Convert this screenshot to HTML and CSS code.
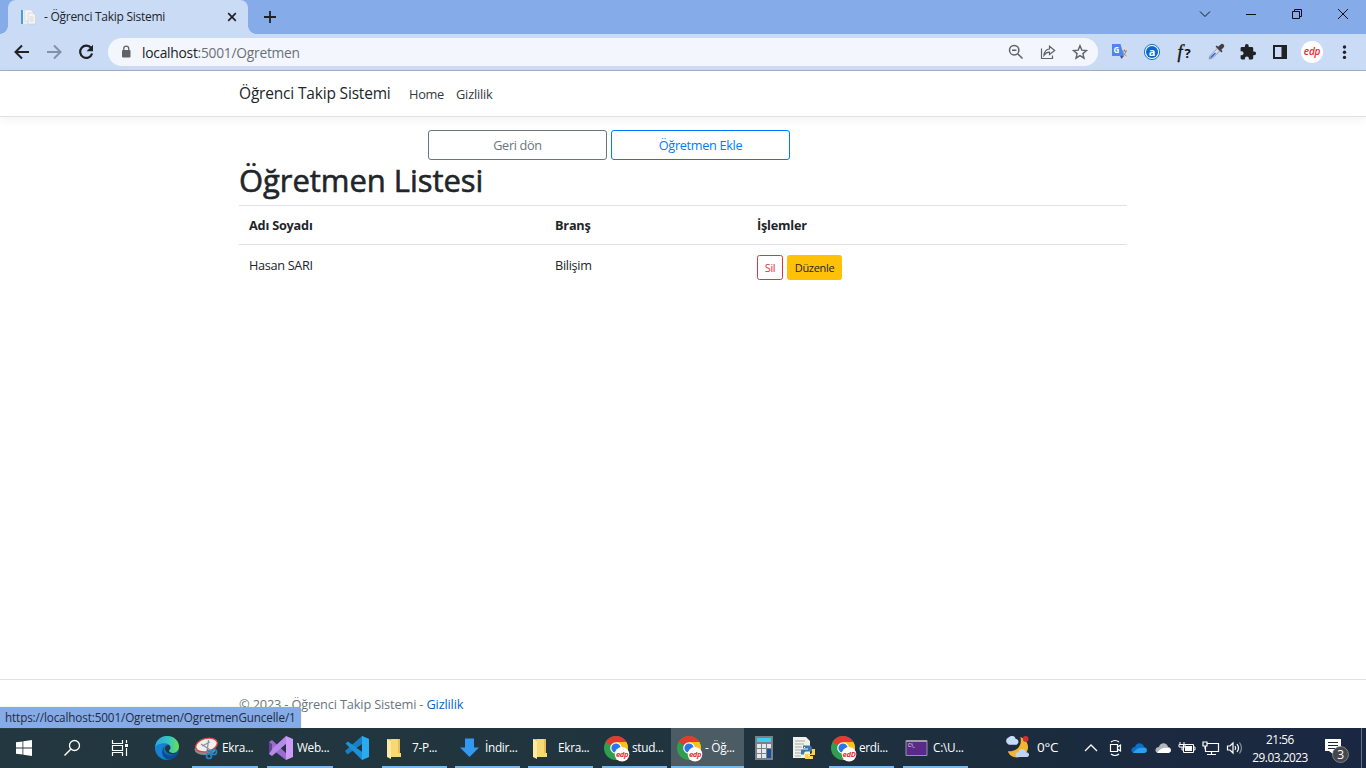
FILE: index.html
```html
<!DOCTYPE html>
<html lang="tr">
<head>
<meta charset="utf-8">
<title>- Öğrenci Takip Sistemi</title>
<link rel="stylesheet" href="styles.css">
</head>
<body>
<svg width="0" height="0" class="defs">
  <defs>
    <linearGradient id="edgeBlue" x1="0" y1="0" x2="1" y2="1"><stop offset="0" stop-color="#1b9de2"/><stop offset="1" stop-color="#0c4a9c"/></linearGradient>
    <linearGradient id="edgeGreen" x1="0" y1="0" x2="1" y2="0"><stop offset="0" stop-color="#2da5e0"/><stop offset=".6" stop-color="#38c8bc"/><stop offset="1" stop-color="#6be04b"/></linearGradient>
    <symbol id="chrome" viewBox="0 0 26 26">
      <circle cx="12" cy="12" r="12" fill="#2f9e4f"/>
      <path d="M12 12 1.6 6A12 12 0 0 1 22.4 6z" fill="#e33b2e"/>
      <path d="M12 6h10.4A12 12 0 0 1 12 24l5.2-9z" fill="#fbc116"/>
      <circle cx="12" cy="12" r="5.8" fill="#fff"/><circle cx="12" cy="12" r="4.6" fill="#2a76e8"/>
      <circle cx="18" cy="18.3" r="7.3" fill="#fff"/>
    </symbol>
    <symbol id="folder" viewBox="0 0 24 24">
      <path d="M5 3h13v17l-13 1z" fill="#e9bd55"/><path d="M9 3h7v14h3v4H9z" fill="#f8d775"/><path d="M5 3l4 2v18l-4-2z" fill="#ffe9a6"/>
    </symbol>
  </defs>
</svg>

<header class="tabstrip">
  <div class="tab">
    <svg class="favicon" viewBox="0 0 16 16"><path d="M1 1h4v14H1z" fill="#4b9fcb"/><path d="M3 1h7v14H3z" fill="#e9eef2"/><path d="M5 1h6l2 2v9H5z" fill="#f7f7f7" stroke="#d3d6da" stroke-width=".6"/><path d="M8 4h5l2.500 2v9H8z" fill="#f5f5f3" stroke="#c8cbcf" stroke-width=".6"/><path d="M9.500 8h4M9.500 10h4M9.500 12h4" stroke="#d8d8d8"/></svg>
    <span class="tab-title">- Öğrenci Takip Sistemi</span>
    <svg class="tab-close" viewBox="0 0 10 10"><path d="M1.200 1.200l7.600 7.600M8.800 1.200 1.200 8.800" stroke="#202124" stroke-width="1.700"/></svg>
  </div>
  <svg class="new-tab" viewBox="0 0 12 12"><path d="M6 0v12M0 6h12" stroke="#202124" stroke-width="1.800"/></svg>
  <div class="window-controls">
    <svg viewBox="0 0 12 12"><path d="M1 3.500l5 5 5-5" fill="none" stroke="#151515"/></svg>
    <svg viewBox="0 0 12 12"><path d="M1 6.500h10" stroke="#111"/></svg>
    <svg viewBox="0 0 12 12"><path d="M1.500 3.500h7v7h-7zM3.500 3.500v-2h7v7h-2" fill="none" stroke="#111"/></svg>
    <svg viewBox="0 0 12 12"><path d="M1 1l10 10M11 1 1 11" stroke="#111"/></svg>
  </div>
</header>

<div class="toolbar">
  <svg class="tool" viewBox="0 0 24 24"><path d="M19 12H6M12 5.500 5.500 12l6.500 6.500" fill="none" stroke="#202124" stroke-width="2"/></svg>
  <svg class="tool" viewBox="0 0 24 24"><path d="M5 12h13M12 5.500l6.500 6.500-6.500 6.500" fill="none" stroke="#8490a6" stroke-width="2"/></svg>
  <svg class="tool" viewBox="0 0 24 24"><path d="M17.200 8.200A6.100 6.100 0 1 0 18.100 13.500" fill="none" stroke="#202124" stroke-width="2.200"/><path d="M19 4.800v6.500h-6.500z" fill="#202124"/></svg>
  <div class="omnibox">
    <svg class="lock" viewBox="0 0 10 14"><rect x="1" y="5" width="8.500" height="7.500" rx="1" fill="#5f6368"/><path d="M2.800 5V3.600a2.450 2.450 0 0 1 4.900 0V5" fill="none" stroke="#5f6368" stroke-width="1.300"/></svg>
    <span class="url"><b>localhost</b>:5001/Ogretmen</span>
    <svg class="omni-icon" viewBox="0 0 20 20"><circle cx="8.200" cy="8.200" r="4.700" fill="none" stroke="#5f6368" stroke-width="1.500"/><path d="M11.700 11.700l4.800 4.800M6 8.200h4.400" stroke="#5f6368" stroke-width="1.500"/></svg>
    <svg class="omni-icon" viewBox="0 0 20 20"><path d="M3.500 6.500v10h11v-3" fill="none" stroke="#5f6368" stroke-width="1.200"/><path d="M11.500 4.300l5.200 4.200-5.200 4v-2.400c-2.500-.1-4 1-5.500 3.200.3-3.500 2-6 5.500-6.300z" fill="none" stroke="#5f6368" stroke-width="1.200"/></svg>
    <svg class="omni-icon" viewBox="0 0 20 20"><path d="M10 3.700l1.800 4.400 4.700.4-3.600 3.100 1.100 4.600-4-2.500-4 2.500 1.100-4.600-3.600-3.100 4.700-.4z" fill="none" stroke="#5f6368" stroke-width="1.400"/></svg>
  </div>
  <div class="extensions">
    <svg class="ext" viewBox="0 0 24 24"><path d="M10 7h9.500v12H13z" fill="#dcdcdc"/><path d="M4 4h8.500l3.500 12H4z" fill="#4a86ee"/><path d="M12 16h4l-2.500 3z" fill="#3457b5"/><text x="5.500" y="13" font-size="8" font-weight="700" fill="#fff">G</text><path d="M14 11h5M16.500 9.500V11M18 11c-.5 2.500-1.500 4-3.200 5M15 12c.8 2 2 3.300 3.600 4" stroke="#76889b" fill="none"/></svg>
    <svg class="ext" viewBox="0 0 24 24"><circle cx="12" cy="12" r="7.600" fill="#eff6ff" stroke="#1778cc"/><circle cx="12" cy="12" r="6" fill="#0b69c9"/><text x="12" y="15.800" text-anchor="middle" font-size="11" font-weight="700" fill="#fff">a</text></svg>
    <span class="font-finder"><i>f</i><b>?</b></span>
    <svg class="ext" viewBox="0 0 24 24"><path d="M5 19l1.200-3.500 7-7 2.500 2.500-7 7z" fill="#d9deeb" stroke="#7b8aa5" stroke-width=".8"/><path d="M6 18l1-2 4-3.500 1 1-4 4z" fill="#3466df"/><path d="M11.500 6.500l6 6 1-1.300-1.200-1.400 2.300-2.400a2.100 2.100 0 0 0-3-3l-2.400 2.300L12.800 5.500z" fill="#433e43"/></svg>
    <svg class="ext" viewBox="0 0 24 24"><path d="M18.200 11.400h-1V8.300c0-.8-.6-1.400-1.400-1.400h-3.100V6a1.900 1.900 0 0 0-3.800 0v.9H6c-.8 0-1.400.6-1.400 1.400v2.900h.9a2 2 0 0 1 0 4.100h-.9v2.800c0 .8.600 1.400 1.400 1.400h2.900v-.9a2 2 0 0 1 4 0v.9h2.900c.8 0 1.400-.6 1.400-1.400v-2.900h1a1.900 1.900 0 0 0 0-3.800z" fill="#202124"/></svg>
    <svg class="ext" viewBox="0 0 24 24"><path d="M5 5h14v14H5zm2 2v10h6.500V7z" fill="#202124" fill-rule="evenodd"/></svg>
    <span class="avatar">edp</span>
    <svg class="ext" viewBox="0 0 24 24"><g fill="#202124"><circle cx="12.500" cy="7" r="1.700"/><circle cx="12.500" cy="12.200" r="1.700"/><circle cx="12.500" cy="17.400" r="1.700"/></g></svg>
  </div>
</div>

<div class="page">
  <nav class="navbar">
    <a class="brand">Öğrenci Takip Sistemi</a>
    <a class="nav-home">Home</a>
    <a class="nav-privacy">Gizlilik</a>
  </nav>
  <main class="content">
    <div class="actions">
      <a class="btn btn-secondary">Geri dön</a>
      <a class="btn btn-primary">Öğretmen Ekle</a>
    </div>
    <h1><span>Öğretmen Listesi</span></h1>
    <table>
      <thead><tr><th class="col-name">Adı Soyadı</th><th class="col-branch">Branş</th><th>İşlemler</th></tr></thead>
      <tbody><tr><td>Hasan SARI</td><td>Bilişim</td><td><div class="row-actions"><a class="btn-sm btn-delete">Sil</a><a class="btn-sm btn-edit">Düzenle</a></div></td></tr></tbody>
    </table>
  </main>
  <footer class="footer"><span>© 2023 - Öğrenci Takip Sistemi - <a>Gizlilik</a></span></footer>
  <div class="status">https://localhost:5001/Ogretmen/OgretmenGuncelle/1</div>
</div>

<div class="taskbar">
  <div class="sys"><svg viewBox="0 0 24 24"><path d="M4 6.300l6.500-.9v6.200H4zM11.300 5.300 20 4v7.600h-8.700zM4 12.400h6.500v6.200L4 17.700zM11.300 12.400H20V20l-8.700-1.300z" fill="#fff"/></svg></div>
  <div class="sys"><svg viewBox="0 0 24 24"><circle cx="14.500" cy="9.500" r="5" fill="none" stroke="#fff" stroke-width="1.300"/><path d="M11 13l-6.500 6.500" stroke="#fff" stroke-width="1.400"/></svg></div>
  <div class="sys"><svg viewBox="0 0 24 24"><path d="M4.500 4v3.500h10V4M4.500 20v-3.500h10V20M4.500 9.500h10v5h-10zM18.500 4v3M18.500 12v8" fill="none" stroke="#fff" stroke-width="1.200"/><path d="M17 8h3v3h-3z" fill="#fff"/></svg></div>
  <div class="sys edge"><svg viewBox="0 0 24 24"><circle cx="12" cy="12" r="12" fill="url(#edgeBlue)"/><path d="M.2 11C1 4 6 0 12 0c7 0 12 5 12 10.500 0 4-3 6.500-6.500 6.500-3 0-4.500-1.500-3.300-2.700 3-3 .2-7-4.200-7-5 0-8.500 1.500-9.800 3.700z" fill="url(#edgeGreen)"/><path d="M9 9.500C5 13 7 21 14 23.800 7 24.500 1 19 .3 12 2 8.500 6 7.500 9 9.500z" fill="#1583cf"/><path d="M9.500 11c-2 4 0 8 5 8.500 3.500.3 6-1 8-2.500-2 4.800-6.500 7-10 6.500C6.500 21.500 5.500 14 9.500 11z" fill="#0c4c96"/><path d="M14.200 14.300c2-2 1.500-4-.5-5.300C11 9 9.500 11 10 13c.6 3.500 5 6 9.500 5l3.300-1.600c-4.800 1.400-9.800.2-8.600-2.100z" fill="#22373f"/></svg></div>
  <div class="task t-snip"><svg viewBox="0 0 24 24"><ellipse cx="11" cy="13.500" rx="10.500" ry="5.500" fill="#8a8a8e"/><ellipse cx="12.500" cy="9" rx="11" ry="6.500" transform="rotate(-15 12.500 9)" fill="#f1eeee" stroke="#d74444" stroke-width="1.300"/><path d="M14.500 4l-1.500 12M7 8l11 7M16 6l-8 4" stroke="#8f9196" stroke-width="1.300"/><g fill="none" stroke="#2387c7" stroke-width="1.700"><circle cx="20" cy="16" r="2.500"/><circle cx="15" cy="20" r="2.500"/><path d="M13 14l5 3-1 3"/></g></svg><span>Ekra...</span></div>
  <div class="task t-vs"><svg viewBox="0 0 24 24"><path d="M0 6l3-2 15 14-1 6L4 14 3 17l-3 1z" fill="#9c6ad0"/><path d="M0 6l3 2v8L0 18z" fill="#65439a"/><path d="M0 18l3 2L18 7l-1-7L4 12z" fill="#b58be7"/><path d="M17 0l7 3v18l-7 3z" fill="#ce9cf8"/></svg><span>Web...</span></div>
  <div class="sys vscode"><svg viewBox="0 0 24 24"><path d="M17 0 0 15l2.500 3.500L24 3z" fill="#187fc4"/><path d="M.5 7.500 3 5.500l19 14L17 24z" fill="#1a91db"/><path d="M17 0l7 3v18l-7 3z" fill="#2baaf1"/></svg></div>
  <div class="task t-folder"><svg><use href="#folder"/></svg><span>7-P...</span></div>
  <div class="task t-down"><svg viewBox="0 0 24 24"><path d="M8 2.500h9v9h5L12.500 21 3 11.500h5z" fill="#3299ee"/></svg><span>İndir...</span></div>
  <div class="task t-folder2"><svg><use href="#folder"/></svg><span>Ekra...</span></div>
  <div class="task chrome t-stud"><div class="chrome-icon"><svg><use href="#chrome"/></svg><b>edp</b></div><span>stud...</span></div>
  <div class="task chrome active"><div class="chrome-icon"><svg><use href="#chrome"/></svg><b>edp</b></div><span>- Öğ...</span></div>
  <div class="sys calc"><svg viewBox="0 0 24 24"><path d="M3 0h18v24H3z" fill="#7a8288"/><path d="M5 2h14v4H5z" fill="#40cdf1"/><path d="M5 8h4v4H5zM10 8h4v4h-4zM15 8h4v4h-4zM5 13h4v4H5zM10 13h4v4h-4zM5 18h4v4H5zM10 18h4v4h-4z" fill="#e5e9eb"/><path d="M15 13h4v9h-4z" fill="#174f9a"/></svg></div>
  <div class="sys python"><svg viewBox="0 0 24 24"><path d="M1 1h13l4 4v17H1z" fill="#f0f0ed"/><path d="M3 5h10M3 8h9M3 11h7M3 14h6M3 17h8M3 20h6" stroke="#a9a9a9"/><path d="M11 9.500h6q3 0 3 3v3h-6q-2 0-2 3h-3v-5h7v-1h-5z" fill="#3b77a8"/><path d="M20 13h3v6h-7v1h5v3h-8v-5h5q2 0 2-2z" fill="#f9d44c"/><path d="M12 11.500h1M18 22h1" stroke="#fff"/></svg></div>
  <div class="task chrome t-erdi"><div class="chrome-icon"><svg><use href="#chrome"/></svg><b>edD</b></div><span>erdi...</span></div>
  <div class="task t-cmd"><svg viewBox="0 0 24 24"><path d="M1 4.500h21v15H1z" fill="#592a88" stroke="#96949b"/><path d="M1 4h21v2H1z" fill="#a29ba5"/><text x="3" y="11" font-size="4.500" fill="#fff">C:\_</text></svg><span>C:\U...</span></div>
  <div class="weather"><svg viewBox="0 0 26 24"><path d="M16 1c2 8-2 15-13 15 2 8 15 9 20 0 3-6-1-13-7-15z" fill="#f3b52d"/><path d="M4 9a4 4 0 0 1-.5-7.500C8-2 11 1 11 3c4 0 4 6 0 6z" fill="#c6dcfb"/><path d="M14 22c-4 0-4-5 0-5 1-5 7-4 8 0 4 0 4 5 0 5z" fill="#bed5f8"/><circle cx="21.500" cy="3" r="3" fill="#d72d31"/></svg><span>0°C</span></div>
  <div class="tray">
    <svg viewBox="0 0 24 24"><path d="M6 15l6-6 6 6" fill="none" stroke="#fff" stroke-width="1.300"/></svg>
    <svg viewBox="0 0 24 24"><path d="M7.500 8.500h7v7h-7zM14.500 11l3-2v6l-3-2M8 6q4-3 8 0M8 18q4 3 8 0" fill="none" stroke="#fff" stroke-width="1.200"/></svg>
    <svg viewBox="0 0 24 24"><path d="M7 17c-4-1-3-6 1-6 1-5 8-5 9 0 4 0 4 6 0 6z" fill="#0c70c9"/><path d="M6 17c3-5 7-6 12-5 3 1 2 5-1 5z" fill="#2ca0ed"/></svg>
    <svg viewBox="0 0 24 24"><path d="M7 17c-4-1-3-6 1-6 1-5 8-5 9 0 4 0 4 6 0 6z" fill="#b4b7bc"/><path d="M6 17c3-5 7-6 12-5 3 1 2 5-1 5z" fill="#fff"/></svg>
    <svg viewBox="0 0 24 24"><path d="M8.500 8.500h10v8h-10zM18.500 11h1.500v3h-1.500M7 11v3h2M5 6v3M9 6v3M4 8.500h6V11H4z" fill="none" stroke="#fff"/><path d="M10 10h7v5h-7z" fill="#fff"/></svg>
    <svg viewBox="0 0 24 24"><path d="M8.500 7.500h11v8h-13v-5M12.500 15.500v3M8 18.500h9M4 6h4v4H4zM6 10v3" fill="none" stroke="#fff" stroke-width="1.200"/></svg>
    <svg viewBox="0 0 24 24"><path d="M4.500 10h2.500l3-3v10l-3-3H4.500zM12 10q1.500 2 0 4M14 8q3 4 0 8" fill="none" stroke="#fff" stroke-width="1.200"/><path d="M16.500 6.500q4 5.500 0 11" fill="none" stroke="#8790a0" stroke-width="1.200"/></svg>
  </div>
  <div class="clock"><span>21:56</span><span>29.03.2023</span></div>
  <div class="notifications"><svg viewBox="0 0 26 26"><path d="M1 2h16v12H9v3l-4-3H1z" fill="#fff"/><path d="M4 5.500h10M4 8.500h10M4 11.500h7" stroke="#1b2941" stroke-width="1.100"/><circle cx="16.500" cy="17.500" r="8" fill="#45474b" stroke="#999da4" stroke-width=".7"/><text x="16.500" y="21.700" text-anchor="middle" font-size="12" fill="#fff">3</text></svg></div>
  <div class="show-desktop"></div>
</div>
</body>
</html>
```
FILE: styles.css
```css
* { box-sizing: border-box; }
body {
  margin: 0; width: 1366px; height: 768px; overflow: hidden;
  display: flex; flex-direction: column;
  font-family: "Open Sans", "Noto Sans", sans-serif;
  font-size: 12.8px; line-height: 19.2px; color: #212529; background: #fff;
  white-space: nowrap;
}
svg { display: block; flex: none; }
.defs { position: absolute; }

.tabstrip { height: 34px; background: #85abe9; display: flex; align-items: flex-start; flex: none; }
.tab {
  position: relative; width: 240px; height: 34px; margin-left: 8px; padding: 0 11px 0 12px;
  display: flex; align-items: center; background: #cadbf6; border-radius: 8px 8px 0 0;
}
.tab::before, .tab::after { content: ""; position: absolute; bottom: 0; width: 8px; height: 8px; }
.tab::before { left: -8px; background: radial-gradient(circle at 0 0, transparent 7.500px, #cadbf6 8px); }
.tab::after { right: -8px; background: radial-gradient(circle at 100% 0, transparent 7.500px, #cadbf6 8px); }
.favicon { width: 16px; height: 16px; margin-right: 8px; }
.tab-title { flex: 1; font-size: 12px; letter-spacing: -.27px; }
.tab-close { width: 10px; height: 10px; }
.new-tab { width: 12px; height: 12px; margin: 11px 0 0 16px; }
.window-controls { display: flex; gap: 34px; margin: 8px 17px 0 auto; }
.window-controls svg { width: 12px; height: 12px; }

.toolbar {
  height: 37px; flex: none; padding-left: 10px; display: flex; align-items: center; gap: 8px;
  background: #cadbf6; border-bottom: 1px solid #a2aecb;
}
.tool { width: 24px; height: 24px; }
.omnibox {
  width: 990px; height: 28px; margin-left: 2px; padding: 0 8px 0 13px; border-radius: 14px;
  display: flex; align-items: center; gap: 12px; background: #f3f7fd;
}
.lock { width: 10px; height: 14px; }
.url { flex: 1; margin-left: -1px; padding-top: 1px; font-size: 13.800px; letter-spacing: -.25px; color: #6b7077; }
.url b { font-weight: 400; color: #202124; }
.omni-icon { width: 20px; height: 20px; }
.extensions { display: flex; align-items: center; gap: 8px; margin-left: 2px; }
.ext { width: 24px; height: 24px; }
.font-finder { width: 24px; text-align: center; font: 18px/22px "Liberation Serif", serif; color: #111; }
.font-finder i { margin-right: 2px; -webkit-text-stroke: .4px #111; }
.font-finder b { font: 700 13px "Open Sans", sans-serif; }
.avatar {
  width: 22px; height: 22px; margin: 0 1px; border-radius: 50%; background: #fff;
  font: italic 600 10px/21px "Open Sans", sans-serif; text-align: center; color: #e52a2a; letter-spacing: -.2px;
}

.page { position: relative; flex: 1; display: flex; flex-direction: column; }
.navbar {
  height: 46px; padding-left: 239px; display: flex; align-items: center;
  border-bottom: 1px solid #dee2e6; box-shadow: 0 3px 10px rgba(0, 0, 0, .05);
}
.brand { width: 170px; font-size: 15.500px; letter-spacing: -.18px; }
.nav-home { width: 47px; font-size: 12.800px; letter-spacing: -.3px; padding-top: 2px; color: #343a40; }
.nav-privacy { font-size: 12.800px; letter-spacing: -.2px; padding-top: 2px; color: #343a40; }
.content { width: 888px; margin: 13px 0 0 239px; flex: 1; font-size: 12.700px; letter-spacing: -.32px; }
.actions { display: flex; gap: 4px; margin-left: 189px; }
.btn { width: 179px; height: 30px; border: 1px solid; border-radius: 3px; text-align: center; line-height: 29px; }
.btn-secondary { color: #6c757d; }
.btn-primary { color: #007bff; }
h1 { margin: 0 0 7px; height: 38px; font-size: 31px; font-weight: 500; line-height: 40px; letter-spacing: -.05px; -webkit-text-stroke: .6px #212529; }
table { width: 888px; border-collapse: collapse; table-layout: fixed; }
th, td { height: 39px; padding: 1px 10px 0; text-align: left; border-top: 1px solid #dee2e6; }
th { letter-spacing: -.2px; }
td { height: 41px; padding-bottom: 1px; }
.col-name { width: 306px; }
.col-branch { width: 202px; }
.row-actions { display: flex; gap: 4px; margin-top: 4px; }
.btn-sm { height: 25px; border: 1px solid; border-radius: 2.500px; text-align: center; font-size: 11px; line-height: 23px; }
.btn-delete { width: 26px; color: #dc3545; }
.btn-edit { width: 55px; color: #212529; background: #ffc107; border-color: #ffc107; }
.footer {
  height: 49px; padding: 2px 0 0 239px; display: flex; align-items: center;
  border-top: 1px solid #dee2e6; color: #6c757d; font-size: 12.800px; letter-spacing: -.17px;
}
.footer a { color: #0366d6; }
.status {
  position: absolute; left: 0; bottom: 0; width: 301px; height: 21px; padding-left: 5px;
  background: #85abe9; border-radius: 0 3px 0 0; font-size: 11.700px; line-height: 21px; color: #222b3b;
  box-shadow: 0 0 1px #999; letter-spacing: -.12px;
}

.taskbar {
  height: 40px; flex: none; display: flex; color: #fff; font-size: 11.800px; letter-spacing: -.3px;
  background: linear-gradient(90deg, #22373f, #20343f 55%, #1b2b3e 78%, #1a2742);
}
.sys { width: 48px; display: flex; align-items: center; justify-content: center; }
.sys svg { width: 24px; height: 24px; }
.edge { width: 46px; }
.task { width: 66px; margin-left: 2px; padding-left: 2px; display: flex; align-items: center; gap: 4px; border-bottom: 2px solid #76b9ed; }
.task > span { padding-top: 2px; }
.task > svg { width: 24px; height: 24px; margin-top: 2px; }
.t-vs { margin-left: 9px; }
.vscode { width: 48px; }
.t-folder { width: 65px; margin-left: 1px; }
.t-folder span, .t-folder2 span { margin-left: 2px; }
.t-down { width: 65px; margin-left: 8px; }
.t-folder2 { width: 65px; margin-left: 8px; }
.t-folder > svg, .t-folder2 > svg { margin-left: -2px; }
.chrome { width: 65px; margin-left: 9px; gap: 2px; }
.chrome-icon { position: relative; width: 26px; height: 26px; margin-top: 3px; }
.chrome-icon svg { width: 26px; height: 26px; }
.chrome-icon b { position: absolute; left: 11px; top: 13px; width: 14px; font-size: 7.500px; line-height: 10px; font-style: italic; color: #e33131; text-align: center; }
.active { width: 73px; margin-left: 4px; padding-left: 6px; background: #4b5c65; }
.calc, .python { width: 40px; }
.t-erdi { margin-left: 5px; }
.t-cmd { width: 65px; margin-left: 9px; }
.weather { margin-left: 37px; width: 74px; display: flex; align-items: center; gap: 7px; font-size: 13.500px; }
.weather svg { width: 25px; height: 23px; margin-top: -2px; }
.tray { display: flex; align-items: center; }
.tray svg { width: 24px; height: 24px; }
.clock { width: 64px; margin-left: 1px; display: flex; flex-direction: column; align-items: center; justify-content: center; line-height: 18px; padding-bottom: 1px; letter-spacing: -.45px; }
.notifications { width: 49px; padding: 9px 0 0 12px; }
.notifications svg { width: 26px; height: 26px; }
.show-desktop { width: 1px; background: #66717f; }
```
